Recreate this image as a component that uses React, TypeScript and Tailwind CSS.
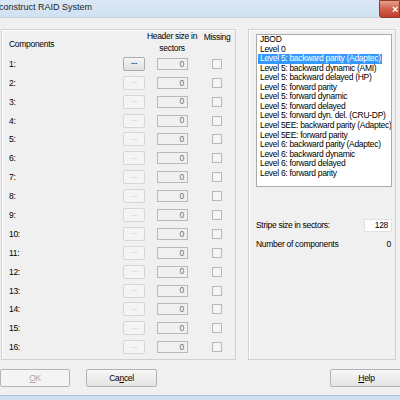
import React from 'react';

const raidLevels = [
  'JBOD',
  'Level 0',
  'Level 5: backward parity (Adaptec)',
  'Level 5: backward dynamic (AMI)',
  'Level 5: backward delayed (HP)',
  'Level 5: forward parity',
  'Level 5: forward dynamic',
  'Level 5: forward delayed',
  'Level 5: forward dyn. del. (CRU-DP)',
  'Level 5EE: backward parity (Adaptec)',
  'Level 5EE: forward parity',
  'Level 6: backward parity (Adaptec)',
  'Level 6: backward dynamic',
  'Level 6: forward delayed',
  'Level 6: forward parity',
];

const rows = Array.from({ length: 16 }, (_, i) => i + 1);

const font = "font-['Liberation_Sans',Arial,sans-serif] text-[8.5px] tracking-[-0.3px] text-black";

const ComponentRow: React.FC<{ n: number }> = ({ n }) => {
  const enabled = n === 1;
  return (
    <div className="flex h-[18.9px] items-center">
      <div className="w-[121px] pl-[7px] leading-[10px]">{n}:</div>
      {enabled ? (
        <div className="flex h-[14px] w-[22px] items-center justify-center rounded-[2px] border border-[#acacac] bg-gradient-to-b from-[#f6f6f6] to-[#dfdfdf] pb-[3px] text-[8px] font-bold leading-none text-[#222222]">
          ...
        </div>
      ) : (
        <div className="flex h-[14px] w-[22px] items-center justify-center rounded-[2px] border border-[#d6d6d6] bg-[#f4f4f4] pb-[3px] text-[8px] leading-none text-[#b0b0b0]">
          ...
        </div>
      )}
      <div className="ml-[12px] flex h-[12px] w-[31px] items-center justify-end border border-[#b9b9b9] bg-[#f0f0f0] pr-[3px] leading-none text-[#707070]">
        0
      </div>
      <div className="ml-[24px] h-[10px] w-[10px] border border-[#b8b8b8] bg-[#f5f5f5]" />
    </div>
  );
};

export default function App() {
  return (
    <div className={`flex h-[400px] w-[400px] flex-col overflow-hidden bg-[#f0f0f0] ${font}`}>
      {/* title bar */}
      <div className="relative flex h-[18px] items-center border-b border-[#c9d3de] bg-gradient-to-b from-[#dbe8f6] to-[#d0e1f2]">
        <span className="-ml-[1px] pb-[1px] text-[9px] tracking-[0px] text-[#1e1e1e]">construct RAID System</span>
        <div className="absolute right-0 top-0 flex h-[18px] w-[21px] items-center justify-end rounded-bl-[3px] border border-[#8e3b2e] bg-gradient-to-b from-[#e3a08e] via-[#d2604a] to-[#c23f29] pr-[1px] text-[11px] font-bold text-white">
          ×
        </div>
      </div>

      {/* group boxes */}
      <div className="mt-[11px] flex h-[332px] gap-[12px] pl-[1px]">
        <div className="w-[235px] border border-[#d0d0d0] shadow-[inset_1px_1px_0_#ffffff]">
          <div className="flex h-[24.5px]">
            <div className="w-[140px] pl-[7px] pt-[9px] leading-[10px]">Components</div>
            <div className="w-[60px] text-center leading-[12px]">
              <div>Header size in</div>
              <div>sectors</div>
            </div>
            <div className="w-[30px] pt-[1px] text-center leading-[12px]">Missing</div>
          </div>
          {rows.map(n => (
            <ComponentRow key={n} n={n} />
          ))}
        </div>

        <div className="flex w-[148px] flex-col border border-[#d0d0d0] pl-[7px] pr-[2px] pt-[4px] shadow-[inset_1px_1px_0_#ffffff]">
          <div className="h-[153px] w-[136px] overflow-hidden border border-[#ababab] bg-white pl-[1px]">
            {raidLevels.map((level, i) => (
              <div key={level} className="h-[9.57px] whitespace-nowrap leading-[9.57px]">
                {i === 2 ? (
                  <span className="inline-block h-[9.57px] bg-[#3399ff] pl-[2px] pr-[1px] text-white">{level}</span>
                ) : (
                  <span className="pl-[2px]">{level}</span>
                )}
              </div>
            ))}
          </div>
          <div className="mt-[32px] flex h-[13px] items-center justify-between pr-[1px]">
            <span className="leading-none">Stripe size in sectors:</span>
            <div className="flex h-[13px] w-[28px] items-center justify-end border border-[#e2e2e2] bg-white pr-[3px] leading-none">
              128
            </div>
          </div>
          <div className="mt-[7px] flex items-center justify-between pr-[2px] leading-[10px]">
            <span>Number of components</span>
            <span>0</span>
          </div>
        </div>
      </div>

      {/* buttons */}
      <div className="mt-[9px] flex h-[18px]">
        <div className="flex h-[18px] w-[70px] items-center justify-center rounded-[2px] border border-[#b5b5b5] bg-[#f4f4f4] text-[#a8a8a8]">
          <span className="underline decoration-[0.5px] underline-offset-1">O</span>K
        </div>
        <div className="ml-[16px] flex h-[18px] w-[71px] items-center justify-center rounded-[2px] border border-[#b3b3b3] bg-gradient-to-b from-[#f7f7f7] to-[#e4e4e4]">
          Ca<span className="underline decoration-[0.5px] underline-offset-1">n</span>cel
        </div>
        <div className="ml-auto -mr-[3px] flex h-[18px] w-[73px] items-center justify-center rounded-[2px] border border-[#b3b3b3] bg-gradient-to-b from-[#f7f7f7] to-[#e4e4e4]">
          <span className="underline decoration-[0.5px] underline-offset-1">H</span>elp
        </div>
      </div>

      <div className="mt-[8px] h-[5px] border-t border-[#aebfd2] bg-[#cfdff0]" />
    </div>
  );
}
